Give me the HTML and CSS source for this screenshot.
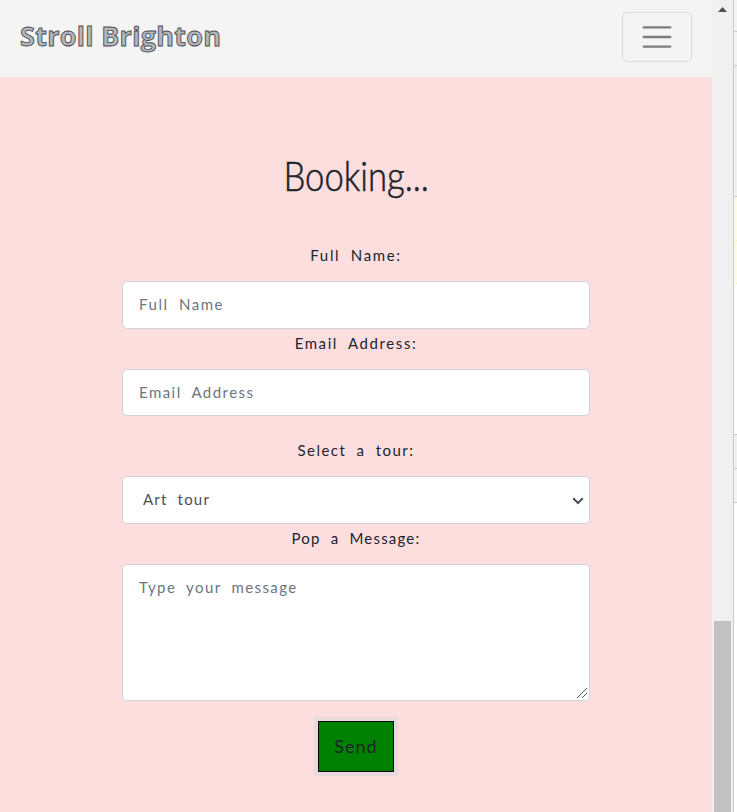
FILE: index.html
```
<!DOCTYPE html>
<html lang="en">
<head>
<meta charset="utf-8">
<title>Stroll Brighton</title>
<link rel="stylesheet" href="styles.css">
</head>
<body>
<div class="page">
  <header class="navbar">
    <a class="brand">Stroll Brighton</a>
    <button class="toggler" aria-label="Menu">
      <svg width="36" height="36" viewBox="0 0 30 30"><path d="M4 7h22M4 15h22M4 23h22" stroke="#7c7c7c" stroke-width="2" stroke-linecap="round"/></svg>
    </button>
  </header>
  <main class="booking">
    <h1 class="title"><span class="title-text">Booking...</span></h1>
    <form class="form">
      <label class="label"><span class="t-name">Full Name:</span></label>
      <div class="control"><span class="p-name">Full Name</span></div>
      <label class="label"><span class="t-email">Email Address:</span></label>
      <div class="control control-email"><span class="p-email">Email Address</span></div>
      <label class="label label-tour"><span class="t-tour">Select a tour:</span></label>
      <div class="control select"><span class="p-tour">Art tour</span>
        <svg class="chevron" width="12" height="8" viewBox="0 0 12 8"><path d="M1.2 1.2 6 6l4.8-4.8" fill="none" stroke="#495057" stroke-width="2"/></svg>
      </div>
      <label class="label"><span class="t-msg">Pop a Message:</span></label>
      <div class="control area"><span class="p-msg">Type your message</span>
        <svg class="grip" width="12" height="12" viewBox="0 0 12 12"><path d="M1 11 11 1M6 11l5-5" stroke="#555" stroke-width="1"/></svg>
      </div>
    </form>
    <button class="send"><span class="send-text">Send</span></button>
  </main>
</div>
<div class="scrollbar">
  <svg class="arrow" width="9" height="5" viewBox="0 0 9 5"><path d="M4.5 0 9 5H0z" fill="#505050"/></svg>
  <div class="thumb"></div>
</div>
<aside class="edge">
  <div class="e1"></div><div class="e2"></div><div class="e3"></div><div class="e4"></div><div class="e5"></div><div class="e6"></div><div class="e7"></div><div class="e8"></div>
</aside>
</body>
</html>
```
FILE: styles.css
```
* { box-sizing: border-box; }
body {
  margin: 0;
  width: 737px;
  height: 812px;
  display: flex;
  overflow: hidden;
  background: #fff;
  color: #212529;
  font: 16px/24px Lato, "Open Sans", sans-serif;
}
.page { width: 712px; background: #fcdedf; }
.navbar {
  height: 77px;
  padding: 12px 20px 15px;
  display: flex;
  justify-content: space-between;
  align-items: flex-start;
  background: #f4f4f4;
}
.brand {
  font: 700 27px/48px "Open Sans", sans-serif;
  letter-spacing: .3px;
  white-space: nowrap;
  color: #b4b6b9;
  -webkit-text-stroke: .9px #4a4d55;
}
.toggler {
  width: 70px;
  height: 50px;
  padding: 0;
  display: flex;
  align-items: center;
  justify-content: center;
  border: 1px solid #dbdbdb;
  border-radius: 5px;
  background: transparent;
}
.booking {
  display: flex;
  flex-direction: column;
  align-items: center;
  padding-top: 70px;
}
.title { margin: 0; height: 97px; font: 300 42px/56px Lato, sans-serif; }
.title-text { display: inline-block; transform: scaleX(.825); -webkit-text-stroke: .6px #212529; }
.form { width: 468px; }
.label {
  display: flex;
  justify-content: center;
  height: 40px;
  padding-top: 2px;
  line-height: 25px;
  font-size: 15px;
  white-space: nowrap;
}
.label:first-child { height: 37px; padding-top: 0; line-height: 23px; }
.label-tour { margin-top: 20px; }
.label, .control { letter-spacing: 1.2px; word-spacing: 5px; }
.t-name { letter-spacing: 1.65px; }
.t-email { letter-spacing: 1.6px; }
.t-tour { letter-spacing: 1.45px; }
.p-name { letter-spacing: 1.55px; }
.p-email { letter-spacing: 1.45px; }
.p-msg { letter-spacing: 1.4px; }
.control {
  position: relative;
  height: 48px;
  padding: 0 16px;
  border: 1px solid #ced4da;
  border-radius: 5px;
  background: #fff;
  color: #6c757d;
  font-size: 15px;
  line-height: 44px;
}
.control-email { height: 47px; }
.select { color: #495057; padding-left: 20px; }
.chevron { position: absolute; right: 5px; top: 20px; }
.area { height: 137px; }
.grip { position: absolute; right: 1px; bottom: 1px; }
.send {
  width: 76px;
  height: 51px;
  margin-top: 20px;
  padding: 0;
  border: 1px solid #000;
  background: #008000;
  box-shadow: 0 0 0 4px #e9dbdc;
  color: #212529;
  font: 18px/49px Lato, sans-serif;
  letter-spacing: 1px;
}
.send-text { display: block; line-height: 47px; }
.scrollbar {
  width: 21px;
  height: 812px;
  padding: 7px 2px 0;
  background: #f0f0f0;
}
.arrow { display: block; margin: 0 auto; }
.thumb { height: 191px; margin-top: 609px; background: #c1c1c1; }
.edge { width: 4px; border-left: 1px solid #cacaca; background: #fff; }
.edge div { border-bottom: 1px solid #cacaca; }
.e1 { height: 32px; background: #f4f4f4; }
.e2 { height: 34px; background: #f4f4f4; }
.e3 { height: 131px; background: #f0f0f0; }
.edge .e4 { height: 44px; background: #fffbe2; border-color: #fff0b0; }
.edge .e5 { height: 43px; background: #fffbe2; border-color: #fff0b0; }
.e6 { height: 151px; background: #fff; }
.e7 { height: 34px; background: #f0f0f0; }
.e8 { height: 34px; background: #f4f4f4; }
```
